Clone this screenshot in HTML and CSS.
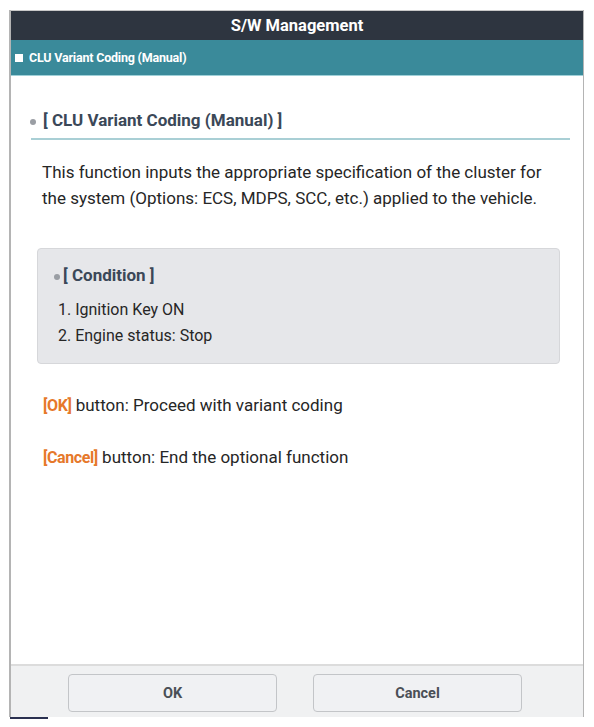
FILE: index.html
```html
<!DOCTYPE html>
<html>
  <head>
    <title>S/W Management</title>
    <meta charset="utf-8">
    <link rel="stylesheet" href="styles.css">
  </head>
  <body>
    <div class="window">
      <div class="titlebar">S/W Management</div>
      <div class="subbar"><span class="square"></span>CLU Variant Coding (Manual)</div>
      <div class="content">
        <h2 class="section"><span class="dot"></span>[ CLU Variant Coding (Manual) ]</h2>
        <p class="desc">This function inputs the appropriate specification of the cluster for the system (Options: ECS, MDPS, SCC, etc.) applied to the vehicle.</p>
        <div class="condition">
          <h3><span class="dot"></span>[ Condition ]</h3>
          <ol>
            <li>1. Ignition Key ON</li>
            <li>2. Engine status: Stop</li>
          </ol>
        </div>
        <p class="hint"><span class="key">[OK]</span> button: Proceed with variant coding</p>
        <p class="hint"><span class="key">[Cancel]</span> button: End the optional function</p>
      </div>
      <div class="footer">
        <button class="btn">OK</button>
        <button class="btn">Cancel</button>
      </div>
    </div>
    <div class="corner"></div>
  </body>
</html>
```

FILE: styles.css
```css
body {
  background: #ffffff;
  font-family: Roboto, "Liberation Sans", sans-serif;
  margin: 0;
}
.window {
  margin: 10px 0 0 9px;
  width: 575px;
  height: 707px;
  border-left: 2px solid #b4b4b4;
  border-right: 1px solid #b4b4b4;
  box-sizing: border-box;
  display: flex;
  flex-direction: column;
}
.titlebar {
  background: #2e3540;
  color: #ffffff;
  font-weight: bold;
  font-size: 16.5px;
  height: 30px;
  line-height: 29px;
  text-align: center;
  border-top: 1px solid #c9c9c9;
  box-sizing: border-box;
}
.subbar {
  background: #3a8a9a;
  color: #ffffff;
  font-weight: bold;
  font-size: 12.5px;
  height: 36px;
  line-height: 35px;
  padding-left: 4px;
  border-bottom: 1px solid #9fd0d8;
  box-sizing: border-box;
  letter-spacing: -0.2px;
}
.square {
  display: inline-block;
  width: 8px;
  height: 8px;
  background: #ffffff;
  margin-right: 6px;
  vertical-align: 0;
}
.content {
  flex: 1;
  padding: 0 13px 0 20px;
}
.dot {
  display: inline-block;
  width: 6px;
  height: 6px;
  border-radius: 50%;
  background: #9a9ea4;
  vertical-align: middle;
  margin-right: 6px;
}
.section {
  margin: 33px 0 0 0;
  padding: 0 0 7px 0;
  font-size: 17px;
  font-weight: bold;
  color: #3b4858;
  border-bottom: 2px solid #a9cfd5;
  line-height: 22px;
}
.section .dot {
  margin-left: -1px;
  margin-right: 7px;
}
.desc {
  margin: 19px 20px 0 11px;
  font-size: 17px;
  line-height: 26px;
  color: #262626;
}
.condition {
  margin: 37px 10px 0 6px;
  background: #e6e7ea;
  border: 1px solid #d6d7da;
  border-radius: 4px;
  height: 116px;
  box-sizing: border-box;
  padding: 16px 10px 0 16px;
}
.condition h3 {
  margin: 0;
  font-size: 17px;
  font-weight: bold;
  color: #3b4858;
  line-height: 20px;
}
.condition .dot {
  margin-right: 3px;
}
.condition ol {
  list-style: none;
  margin: 12px 0 0 0;
  padding: 0 0 0 4px;
  font-size: 16px;
  color: #262626;
}
.condition li {
  line-height: 26px;
}
.hint {
  margin: 31px 0 0 12px;
  font-size: 17px;
  line-height: 20px;
  color: #262626;
}
.key {
  color: #e6782a;
  font-weight: bold;
  font-size: 16px;
  letter-spacing: -0.4px;
}
.footer {
  height: 53px;
  background: #f0f1f2;
  border-top: 2px solid #dcdcdc;
  box-sizing: border-box;
  display: flex;
  gap: 36px;
  padding: 8px 0 0 57px;
}
.btn {
  width: 209px;
  height: 38px;
  background: #f0f1f3;
  border: 1px solid #c3c5c8;
  border-radius: 4px;
  font-family: Roboto, "Liberation Sans", sans-serif;
  font-weight: bold;
  font-size: 14.5px;
  color: #4a4f56;
}
.corner {
  margin-left: 10px;
  width: 38px;
  height: 2px;
  background: #2a3050;
}
```
